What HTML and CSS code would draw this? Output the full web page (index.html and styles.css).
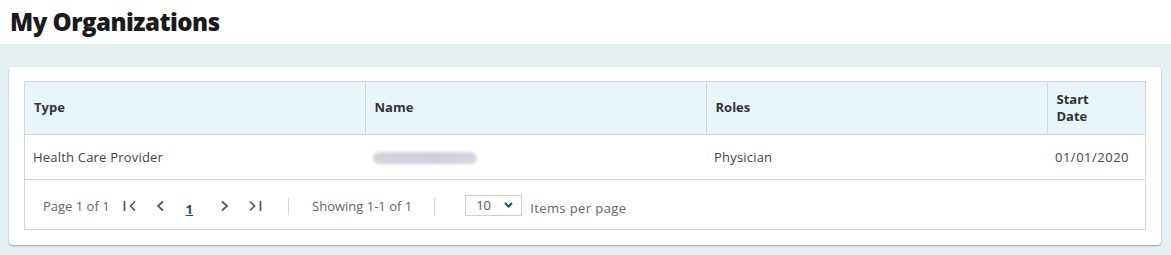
FILE: index.html
```html
<!DOCTYPE html>
<html>
<head>
<meta charset="utf-8">
<link rel="stylesheet" href="styles.css">
</head>
<body>
<header class="page-head">
  <h1 class="page-title">My Organizations</h1>
</header>
<main class="content">
  <section class="card">
    <div class="grid">
      <table class="orgs">
        <colgroup>
          <col class="c-type"><col class="c-name"><col class="c-roles"><col class="c-date">
        </colgroup>
        <thead>
          <tr>
            <th>Type</th>
            <th>Name</th>
            <th>Roles</th>
            <th class="th-date">Start Date</th>
          </tr>
        </thead>
        <tbody>
          <tr>
            <td>Health Care Provider</td>
            <td><span class="blurred"></span></td>
            <td>Physician</td>
            <td>01/01/2020</td>
          </tr>
        </tbody>
      </table>
      <div class="pager">
        <span class="page-info">Page 1 of 1</span>
        <span class="nav">
          <svg class="ico first" width="14" height="14" viewBox="0 0 14 14"><path d="M1.5 2v10M12 2.5L7.5 7l4.5 4.5" fill="none" stroke="#555" stroke-width="1.7"/></svg>
          <svg class="ico prev" width="14" height="14" viewBox="0 0 14 14"><path d="M10 2.5L5 7l5 4.5" fill="none" stroke="#555" stroke-width="1.7"/></svg>
          <a class="page-num">1</a>
          <svg class="ico next" width="14" height="14" viewBox="0 0 14 14"><path d="M4 2.5L9 7l-5 4.5" fill="none" stroke="#555" stroke-width="1.7"/></svg>
          <svg class="ico last" width="14" height="14" viewBox="0 0 14 14"><path d="M2 2.5L6.5 7 2 11.5M12.5 2v10" fill="none" stroke="#555" stroke-width="1.7"/></svg>
        </span>
        <span class="sep sep-a"></span>
        <span class="showing">Showing 1-1 of 1</span>
        <span class="sep sep-b"></span>
        <span class="select">10
          <svg class="chev" width="9" height="6" viewBox="0 0 9 6"><path d="M1 1l3.5 3.5L8 1" fill="none" stroke="#1c4b5c" stroke-width="2"/></svg>
        </span>
        <span class="ipp">Items per page</span>
      </div>
    </div>
  </section>
</main>
</body>
</html>
```
FILE: styles.css
```css
* { box-sizing: border-box; }
html, body { margin: 0; height: 100%; }
body {
  font-family: "Open Sans", "Liberation Sans", sans-serif;
  color: #333;
  background: #e4f0f2;
  display: flex;
  flex-direction: column;
}
.page-head {
  background: #fff;
  height: 44px;
  padding: 8px 10px 0;
}
.page-title {
  margin: 0;
  font-size: 24px;
  font-weight: 800;
  color: #1b1b1b;
  line-height: 28px;
  letter-spacing: -0.5px;
}
.content {
  flex: 1;
  background: #e4f0f2;
  padding: 23px 10px 10px 9px;
}
.card {
  background: #fff;
  border-radius: 4px;
  box-shadow: 0 1px 2px rgba(0,0,0,0.35);
  padding: 14px 15px 15px 15px;
}
.grid {
  border: 1px solid #d6d6d6;
}
.orgs {
  width: 100%;
  border-collapse: collapse;
  table-layout: fixed;
  font-size: 13px;
}
.c-type { width: 340px; }
.c-name, .c-roles { width: 341px; }
.c-date { width: auto; }
.orgs th {
  background: #e8f6fb;
  text-align: left;
  font-weight: 700;
  color: #333;
  height: 52px;
  padding: 0 9px;
  line-height: 17px;
  border-left: 1px solid #d6d6d6;
  border-bottom: 1px solid #d6d6d6;
}
.orgs th.th-date { padding-right: 40px; }
.orgs th:first-child, .orgs td:first-child { border-left: none; }
.orgs td {
  height: 45px;
  padding: 0 8px;
  color: #444;
  border-bottom: 1px solid #d6d6d6;
  white-space: nowrap;
  letter-spacing: 0.2px;
}
.orgs td:last-child { letter-spacing: 0.5px; }
.blurred {
  display: block;
  width: 104px;
  height: 12px;
  margin-top: 2px;
  border-radius: 6px;
  background: linear-gradient(90deg, #d3d4da 0%, #cdd0dc 60%, #d4d6dd 100%);
  filter: blur(1.5px);
}
.pager {
  height: 49px;
  display: flex;
  align-items: center;
  padding: 4px 0 0 18px;
  font-size: 13px;
  color: #666;
}
.nav {
  display: flex;
  align-items: center;
  margin-left: 13px;
}
.ico { display: block; }
.prev { margin-left: 16px; }
.page-num {
  color: #1c4b5c;
  font-weight: 700;
  text-decoration: underline;
  font-size: 13px;
  margin: 5px 0 0 19px;
}
.next { margin-left: 25px; }
.last { margin-left: 16px; }
.sep {
  width: 1px;
  height: 17px;
  background: #d6d6d6;
}
.sep-a { margin: 0 23px 0 26px; }
.sep-b { margin: 0 30px 0 22px; }
.select {
  display: flex;
  align-items: center;
  justify-content: space-between;
  width: 57px;
  height: 21px;
  border: 1px solid #cfcfcf;
  padding: 0 8px 0 10px;
  color: #555;
  margin-top: -2px;
}
.chev { display: block; }
.ipp { margin-left: 8px; margin-top: 4px; letter-spacing: 0.4px; }
```
